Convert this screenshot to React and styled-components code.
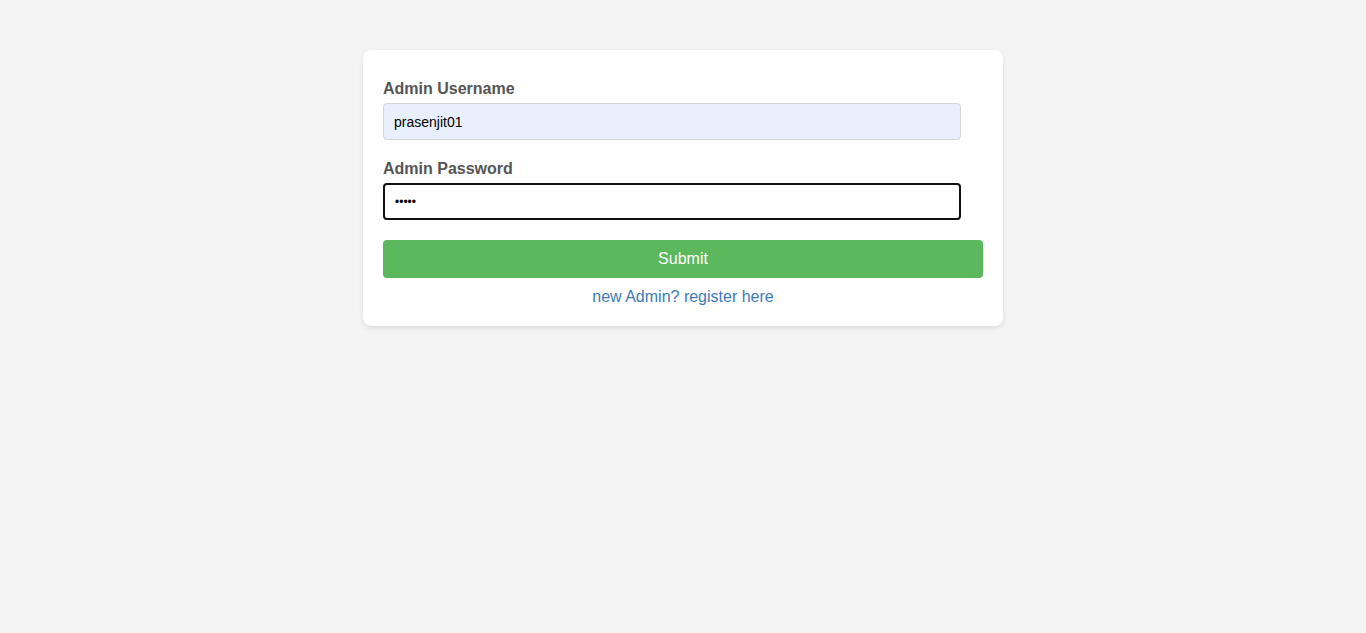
import React from "react";
import styled, { createGlobalStyle } from "styled-components";

const Global = createGlobalStyle`
  html, body { margin: 0; padding: 0; background: #f4f4f4; }
  body { font-family: "Liberation Sans", Arial, sans-serif; }
  * { box-sizing: border-box; }
`;

const Page = styled.div`
  min-height: 633px;
  padding-top: 50px;
  display: flex;
  justify-content: center;
  align-items: flex-start;
`;

const Card = styled.form`
  width: 640px;
  background: #fff;
  border-radius: 8px;
  box-shadow: 0 2px 5px rgba(0, 0, 0, 0.1);
  padding: 30px 20px 20px;
  display: flex;
  flex-direction: column;
`;

const Label = styled.label`
  display: block;
  font-size: 16px;
  font-weight: bold;
  color: #555;
  line-height: 18px;
  margin-bottom: 5px;
`;

const Input = styled.input`
  width: 578px;
  height: 37px;
  padding: 0 10px;
  font-family: "Liberation Sans", Arial, sans-serif;
  font-size: ${(p) => (p.type === "password" ? "12px" : "14px")};
  color: #000;
  caret-color: #000;
  background: ${(p) => (p.$filled ? "#e8f0fe" : "#fff")};
  border: ${(p) => (p.$focused ? "2px solid #111" : "1px solid #d3d6db")};
  border-radius: 4px;
  outline: none;
  margin-bottom: 20px;
`;

const Button = styled.button`
  width: 600px;
  height: 38px;
  background: #5cb85c;
  color: #fff;
  border: none;
  border-radius: 4px;
  font-family: "Liberation Sans", Arial, sans-serif;
  font-size: 16px;
  cursor: pointer;
`;

const LinkText = styled.a`
  display: block;
  text-align: center;
  margin-top: 10px;
  font-size: 16px;
  line-height: 18px;
  color: #3d7ab8;
  text-decoration: none;
`;

export default function App() {
  return (
    <>
      <Global />
      <Page>
        <Card onSubmit={(e) => e.preventDefault()}>
          <Label>Admin Username</Label>
          <Input $filled type="text" defaultValue="prasenjit01" />
          <Label>Admin Password</Label>
          <Input $focused type="password" defaultValue="12345" />
          <Button type="submit">Submit</Button>
          <LinkText href="#">new Admin? register here</LinkText>
        </Card>
      </Page>
    </>
  );
}
